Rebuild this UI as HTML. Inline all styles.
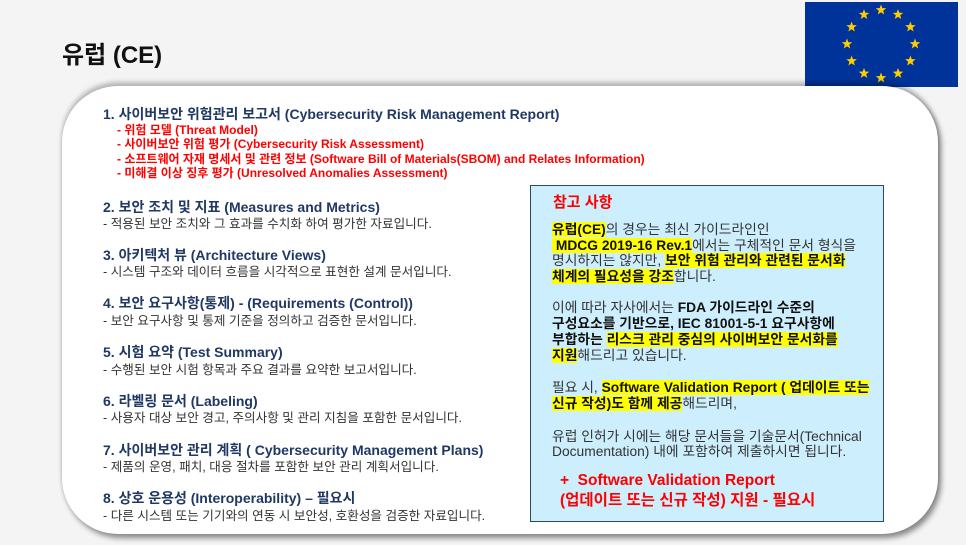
<!DOCTYPE html>
<html><head><meta charset="utf-8"><style>
body{margin:0;width:966px;height:545px;background:#f4f4f4;position:relative;overflow:hidden;font-family:"Liberation Sans","Noto Sans CJK KR",sans-serif}
.abs{position:absolute;white-space:nowrap}
.card{position:absolute;left:62px;top:86px;width:876px;height:448px;background:#fff;border-radius:56px;box-shadow:3px 4px 6px rgba(0,0,0,.45),0 -4px 5px rgba(0,0,0,.25)}
.h{font-weight:bold;color:#1f3864;font-size:14px;left:103px}
.d{color:#333;font-size:12.6px;left:103px}
.r{color:#f00;font-weight:bold;font-size:12px;left:117px}
.box{position:absolute;left:530px;top:185px;width:352px;height:335px;background:#cdeefc;border:1.5px solid #2e4a5e}
.b{font-size:13.8px;color:#333;left:552px}
.b b{color:#111}
.hl{background:#ffff00}
</style></head><body>
<div class="abs" style="left:62px;top:35px;font-size:24px;font-weight:bold;color:#111">유럽 (CE)</div>
<svg class="abs" style="left:805px;top:2px" width="153" height="85"><rect width="153" height="85" fill="#003399"/>
<defs><polygon id="st" fill="#ffcc00" points="0,-5.5 1.35,-1.86 5.23,-1.7 2.19,0.71 3.23,4.45 0,2.3 -3.23,4.45 -2.19,0.71 -5.23,-1.7 -1.35,-1.86"/></defs>
<use href="#st" x="76" y="8"/><use href="#st" x="93" y="12.6"/><use href="#st" x="105.4" y="25"/><use href="#st" x="110" y="42"/>
<use href="#st" x="105.4" y="59"/><use href="#st" x="93" y="71.4"/><use href="#st" x="76" y="76"/><use href="#st" x="59" y="71.4"/>
<use href="#st" x="46.6" y="59"/><use href="#st" x="42" y="42"/><use href="#st" x="46.6" y="25"/><use href="#st" x="59" y="12.6"/>
</svg>
<div class="card"></div>
<div class="abs h" style="top:104px">1. 사이버보안 위험관리 보고서 (Cybersecurity Risk Management Report)</div>
<div class="abs r" style="top:121px">- 위험 모델 (Threat Model)</div>
<div class="abs r" style="top:135px">- 사이버보안 위험 평가 (Cybersecurity Risk Assessment)</div>
<div class="abs r" style="top:150px">- 소프트웨어 자재 명세서 및 관련 정보 (Software Bill of Materials(SBOM) and Relates Information)</div>
<div class="abs r" style="top:164px">- 미해결 이상 징후 평가 (Unresolved Anomalies Assessment)</div>
<div class="abs h" style="top:197px">2. 보안 조치 및 지표 (Measures and Metrics)</div>
<div class="abs d" style="top:213px">- 적용된 보안 조치와 그 효과를 수치화 하여 평가한 자료입니다.</div>
<div class="abs h" style="top:245px">3. 아키텍처 뷰 (Architecture Views)</div>
<div class="abs d" style="top:261px">- 시스템 구조와 데이터 흐름을 시각적으로 표현한 설계 문서입니다.</div>
<div class="abs h" style="top:293px">4. 보안 요구사항(통제) - (Requirements (Control))</div>
<div class="abs d" style="top:310px">- 보안 요구사항 및 통제 기준을 정의하고 검증한 문서입니다.</div>
<div class="abs h" style="top:342px">5. 시험 요약 (Test Summary)</div>
<div class="abs d" style="top:359px">- 수행된 보안 시험 항목과 주요 결과를 요약한 보고서입니다.</div>
<div class="abs h" style="top:391px">6. 라벨링 문서 (Labeling)</div>
<div class="abs d" style="top:407px">- 사용자 대상 보안 경고, 주의사항 및 관리 지침을 포함한 문서입니다.</div>
<div class="abs h" style="top:440px">7. 사이버보안 관리 계획 ( Cybersecurity Management Plans)</div>
<div class="abs d" style="top:456px">- 제품의 운영, 패치, 대응 절차를 포함한 보안 관리 계획서입니다.</div>
<div class="abs h" style="top:488px">8. 상호 운용성 (Interoperability) – 필요시</div>
<div class="abs d" style="top:505px">- 다른 시스템 또는 기기와의 연동 시 보안성, 호환성을 검증한 자료입니다.</div>
<div class="box"></div>
<div class="abs" style="left:553px;top:191px;font-size:15px;font-weight:bold;color:#f00">참고 사항</div>
<div class="abs b" style="top:218px"><b class="hl">유럽(CE)</b>의 경우는 최신 가이드라인인</div>
<div class="abs b" style="top:234px"><b class="hl">&nbsp;MDCG 2019-16 Rev.1</b>에서는 구체적인 문서 형식을</div>
<div class="abs b" style="top:249px">명시하지는 않지만, <b class="hl">보안 위험 관리와 관련된 문서화</b></div>
<div class="abs b" style="top:265px"><b class="hl">체계의 필요성을 강조</b>합니다.</div>
<div class="abs b" style="top:296px">이에 따라 자사에서는 <b>FDA 가이드라인 수준의</b></div>
<div class="abs b" style="top:312px"><b>구성요소를 기반으로, IEC 81001-5-1 요구사항에</b></div>
<div class="abs b" style="top:328px"><b>부합하는 </b><b class="hl">리스크 관리 중심의 사이버보안 문서화를</b></div>
<div class="abs b" style="top:344px"><b class="hl">지원</b>해드리고 있습니다.</div>
<div class="abs b" style="top:376px">필요 시, <b class="hl">Software Validation Report ( 업데이트 또는</b></div>
<div class="abs b" style="top:392px"><b class="hl">신규 작성)도 함께 제공</b>해드리며,</div>
<div class="abs b" style="top:425px">유럽 인허가 시에는 해당 문서들을 기술문서(Technical</div>
<div class="abs b" style="top:440px">Documentation) 내에 포함하여 제출하시면 됩니다.</div>
<div class="abs" style="left:560px;top:472px;font-size:15.5px;font-weight:bold;color:#f00">+&nbsp; Software Validation Report</div>
<div class="abs" style="left:560px;top:488px;font-size:15.5px;font-weight:bold;color:#f00">(업데이트 또는 신규 작성) 지원 - 필요시</div>
</body></html>
